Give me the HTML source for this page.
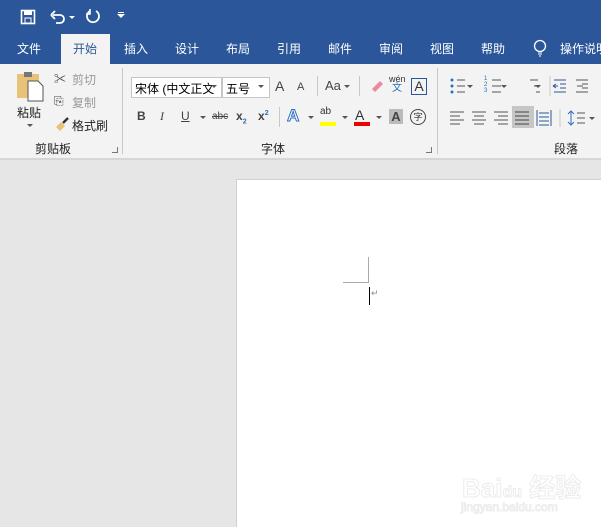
<!DOCTYPE html>
<html><head><meta charset="utf-8"><style>
*{margin:0;padding:0;box-sizing:border-box}
body{width:601px;height:527px;overflow:hidden;background:#e6e6e6;font-family:"Liberation Sans","Noto Sans CJK SC",sans-serif;position:relative}
.a{position:absolute;white-space:nowrap}
.t{color:#fff;font-size:12px;top:40px}
.r{font-size:12px;color:#222}
.g{color:#999}
.ic{font-size:12px;color:#444}
.sep{position:absolute;width:1px;background:#c8c8c8}
</style></head><body>
<div class="a" style="left:0;top:0;width:601px;height:64px;background:#2b579a"></div>
<svg class="a" style="left:20px;top:9px" width="16" height="16"><rect x="1.5" y="1.5" width="13" height="13" fill="none" stroke="#fff" stroke-width="1.6"/><rect x="4" y="2" width="8" height="4" fill="#fff"/><rect x="5" y="9" width="6" height="5" fill="none" stroke="#fff"/></svg>
<svg class="a" style="left:50px;top:9px" width="26" height="16"><path d="M3 6 H10 A4 4 0 0 1 10 14 H6" fill="none" stroke="#fff" stroke-width="1.8"/><path d="M1 6 L5 2 M1 6 L5 10" stroke="#fff" stroke-width="1.8"/><path d="M19 7 l3 3 l3 -3z" fill="#fff"/></svg>
<svg class="a" style="left:85px;top:8px" width="16" height="16"><path d="M5 3 A6 6 0 1 0 11 3" fill="none" stroke="#fff" stroke-width="1.8"/><path d="M5 1 V6 H1" fill="none" stroke="#fff" stroke-width="1.6"/></svg>
<div class="a" style="left:118px;top:12px;width:6px;height:1px;background:#fff"></div>
<svg class="a" style="left:117px;top:14px" width="8" height="5"><path d="M0 0 h8 l-4 4z" fill="#fff"/></svg>
<div class="a" style="left:61px;top:34px;width:49px;height:30px;background:#f3f3f3"></div>
<div class="a t" style="left:17px">文件</div>
<div class="a t" style="left:73px;color:#2b579a">开始</div>
<div class="a t" style="left:124px">插入</div>
<div class="a t" style="left:175px">设计</div>
<div class="a t" style="left:226px">布局</div>
<div class="a t" style="left:277px">引用</div>
<div class="a t" style="left:328px">邮件</div>
<div class="a t" style="left:379px">审阅</div>
<div class="a t" style="left:430px">视图</div>
<div class="a t" style="left:481px">帮助</div>
<svg class="a" style="left:533px;top:39px" width="14" height="20"><circle cx="7" cy="7" r="5.5" fill="none" stroke="#fff" stroke-width="1.3"/><path d="M5 13 h4 M5 15 h4 M6 17 h2" stroke="#fff"/></svg>
<div class="a t" style="left:560px">操作说明</div>
<div class="a" style="left:0;top:64px;width:601px;height:94px;background:#f3f3f3"></div>
<div class="a" style="left:0;top:158px;width:601px;height:2px;background:#d6d6d6"></div>
<div class="sep" style="left:122px;top:68px;height:86px"></div>
<div class="sep" style="left:437px;top:68px;height:86px"></div>
<svg class="a" style="left:16px;top:70px" width="30" height="32"><rect x="1" y="4" width="22" height="24" fill="#e8c277"/><rect x="8" y="2" width="8" height="5" fill="#777"/><path d="M12 11 h10 l5 5 v15 h-15z" fill="#fff" stroke="#555"/></svg>
<div class="a r" style="left:17px;top:104px">粘贴</div>
<svg class="a" style="left:27px;top:124px" width="6" height="4"><path d="M0 0h6l-3 3z" fill="#555"/></svg>
<div class="a ic g" style="left:54px;top:70px">✂</div>
<div class="a r g" style="left:72px;top:71px">剪切</div>
<div class="a ic g" style="left:54px;top:94px">⎘</div>
<div class="a r g" style="left:72px;top:94px">复制</div>
<svg class="a" style="left:54px;top:117px" width="16" height="14"><path d="M2 10 l5 -5 l4 4 l-5 5z" fill="#e8c277"/><path d="M9 6 l5 -5" stroke="#333" stroke-width="2.5"/></svg>
<div class="a r" style="left:72px;top:117px">格式刷</div>
<div class="a r" style="left:35px;top:140px">剪贴板</div>
<div class="a" style="left:112px;top:147px;width:6px;height:6px;border-right:1px solid #777;border-bottom:1px solid #777"></div>
<div class="a" style="left:131px;top:77px;width:91px;height:21px;background:#fff;border:1px solid #c6c6c6;font-size:12px;padding:2px 3px;overflow:hidden">宋体 (中文正文</div>
<svg class="a" style="left:211px;top:85px" width="6" height="4"><path d="M0 0h6l-3 3z" fill="#555"/></svg>
<div class="a" style="left:222px;top:77px;width:48px;height:21px;background:#fff;border:1px solid #c6c6c6;font-size:12px;padding:2px 3px">五号</div>
<svg class="a" style="left:258px;top:85px" width="6" height="4"><path d="M0 0h6l-3 3z" fill="#555"/></svg>
<div class="a" style="left:275px;top:78px;font-size:14px;color:#444">A</div>
<div class="a" style="left:297px;top:81px;font-size:11px;color:#444">A</div>
<div class="a" style="left:325px;top:78px;font-size:13px;color:#444">Aa</div>
<svg class="a" style="left:344px;top:85px" width="6" height="4"><path d="M0 0h6l-3 3z" fill="#555"/></svg>
<div class="sep" style="left:317px;top:76px;height:20px"></div>
<div class="sep" style="left:359px;top:76px;height:20px"></div>
<svg class="a" style="left:368px;top:77px" width="16" height="16"><path d="M4 12 l8 -8 l3 3 l-8 8z" fill="#e9899b"/></svg>
<div class="a" style="left:389px;top:75px;font-size:9px;color:#333;line-height:9px">wén<br><span style="color:#2b6fbf;font-size:10px;padding-left:3px">文</span></div>
<div class="a" style="left:411px;top:78px;width:16px;height:17px;border:1px solid #2b579a;font-size:14px;line-height:15px;text-align:center;color:#333">A</div>
<div class="a" style="left:137px;top:109px;font-size:12px;font-weight:bold;color:#444">B</div>
<div class="a" style="left:160px;top:109px;font-size:12px;font-style:italic;font-family:'Liberation Serif';color:#444">I</div>
<div class="a" style="left:181px;top:109px;font-size:12px;text-decoration:underline;color:#444">U</div>
<svg class="a" style="left:200px;top:116px" width="6" height="4"><path d="M0 0h6l-3 3z" fill="#555"/></svg>
<div class="a" style="left:212px;top:111px;font-size:10px;text-decoration:line-through;color:#444">abc</div>
<div class="a" style="left:236px;top:109px;font-size:12px;font-weight:bold;color:#444">x<sub style="font-size:7px;color:#2b6fbf">2</sub></div>
<div class="a" style="left:258px;top:109px;font-size:12px;font-weight:bold;color:#444">x<sup style="font-size:7px;color:#2b6fbf">2</sup></div>
<div class="sep" style="left:279px;top:107px;height:20px"></div>
<div class="a" style="left:287px;top:106px;font-size:17px;color:#fff;-webkit-text-stroke:1px #2b6fbf;font-weight:bold">A</div>
<svg class="a" style="left:308px;top:116px" width="6" height="4"><path d="M0 0h6l-3 3z" fill="#555"/></svg>
<div class="a" style="left:320px;top:106px;font-size:10px;color:#333">ab</div>
<div class="a" style="left:320px;top:122px;width:16px;height:4px;background:#ff0"></div>
<svg class="a" style="left:342px;top:116px" width="6" height="4"><path d="M0 0h6l-3 3z" fill="#555"/></svg>
<div class="a" style="left:355px;top:107px;font-size:14px;color:#333">A</div>
<div class="a" style="left:354px;top:122px;width:16px;height:4px;background:#e00"></div>
<svg class="a" style="left:376px;top:116px" width="6" height="4"><path d="M0 0h6l-3 3z" fill="#555"/></svg>
<div class="a" style="left:389px;top:109px;width:14px;height:15px;background:#bbb;font-size:13px;font-weight:bold;line-height:15px;text-align:center;color:#444">A</div>
<div class="a" style="left:410px;top:109px;width:16px;height:16px;border:1px solid #444;border-radius:50%;font-size:9px;line-height:14px;text-align:center;color:#333">字</div>
<div class="a r" style="left:261px;top:140px">字体</div>
<div class="a" style="left:426px;top:147px;width:6px;height:6px;border-right:1px solid #777;border-bottom:1px solid #777"></div>
<svg class="a" style="left:448px;top:76px" width="153" height="20" stroke="#555" fill="none">
<circle cx="4" cy="4" r="1.5" fill="#2b6fbf" stroke="none"/><circle cx="4" cy="10" r="1.5" fill="#2b6fbf" stroke="none"/><circle cx="4" cy="16" r="1.5" fill="#2b6fbf" stroke="none"/>
<path d="M9 4h8M9 10h8M9 16h8"/><path d="M19 9h6l-3 3z" fill="#555" stroke="none"/>
<path d="M44 4h9M44 10h9M44 16h9"/><path d="M53 9h6l-3 3z" fill="#555" stroke="none"/>
<path d="M82 4h8M86 10h6M88 16h4"/><path d="M87 9h6l-3 3z" fill="#555" stroke="none"/>
<path d="M102 0v20" stroke="#c8c8c8"/><path d="M106 4h12M112 8h6M112 12h6M106 16h12M110 10h-5M105 10l3-2M105 10l3 2" stroke="#2b579a"/>
<path d="M128 4h12M134 8h6M134 12h6M128 16h12M129 10h6" stroke="#555"/></svg>
<div class="a" style="left:484px;top:76px;font-size:6px;color:#2b6fbf;line-height:6px">1<br>2<br>3</div>
<div class="a" style="left:512px;top:106px;width:22px;height:22px;background:#c6c6c6"></div>
<svg class="a" style="left:448px;top:109px" width="153" height="18" stroke="#555" fill="none">
<path d="M2 3h14M2 7h10M2 11h14M2 15h10"/>
<path d="M24 3h14M26 7h10M24 11h14M26 15h10"/>
<path d="M46 3h14M50 7h10M46 11h14M50 15h10"/>
<path d="M67 3h14M67 7h14M67 11h14M67 15h14" stroke="#444"/>
<path d="M89 1v16M103 1v16M91 4h10M91 8h10M91 12h10M91 16h10" stroke="#2b579a"/>
<path d="M112 0v18" stroke="#c8c8c8"/><path d="M123 2v14M120 5l3-3l3 3M120 13l3 3l3-3" stroke="#2b6fbf"/><path d="M129 4h8M129 9h8M129 14h8"/><path d="M141 8h6l-3 3z" fill="#555" stroke="none"/></svg>
<div class="a r" style="left:554px;top:140px">段落</div>
<div class="a" style="left:236px;top:179px;width:365px;height:348px;background:#fff;border-left:1px solid #d0d0d0;border-top:1px solid #d0d0d0"></div>
<div class="a" style="left:368px;top:257px;width:1px;height:26px;background:#aaa"></div>
<div class="a" style="left:343px;top:282px;width:26px;height:1px;background:#aaa"></div>
<div class="a" style="left:369px;top:287px;width:1px;height:18px;background:#000"></div>
<div class="a" style="left:371px;top:288px;font-size:9px;color:#888">↵</div>
<div class="a" style="left:462px;top:468px;font-size:26px;font-weight:bold;color:#fff;-webkit-text-stroke:1px #ececec">Bai<span style="font-size:16px">du</span> 经验</div>
<div class="a" style="left:461px;top:500px;font-size:12px;color:#fff;-webkit-text-stroke:1px #ededed">jingyan.baidu.com</div>
</body></html>
